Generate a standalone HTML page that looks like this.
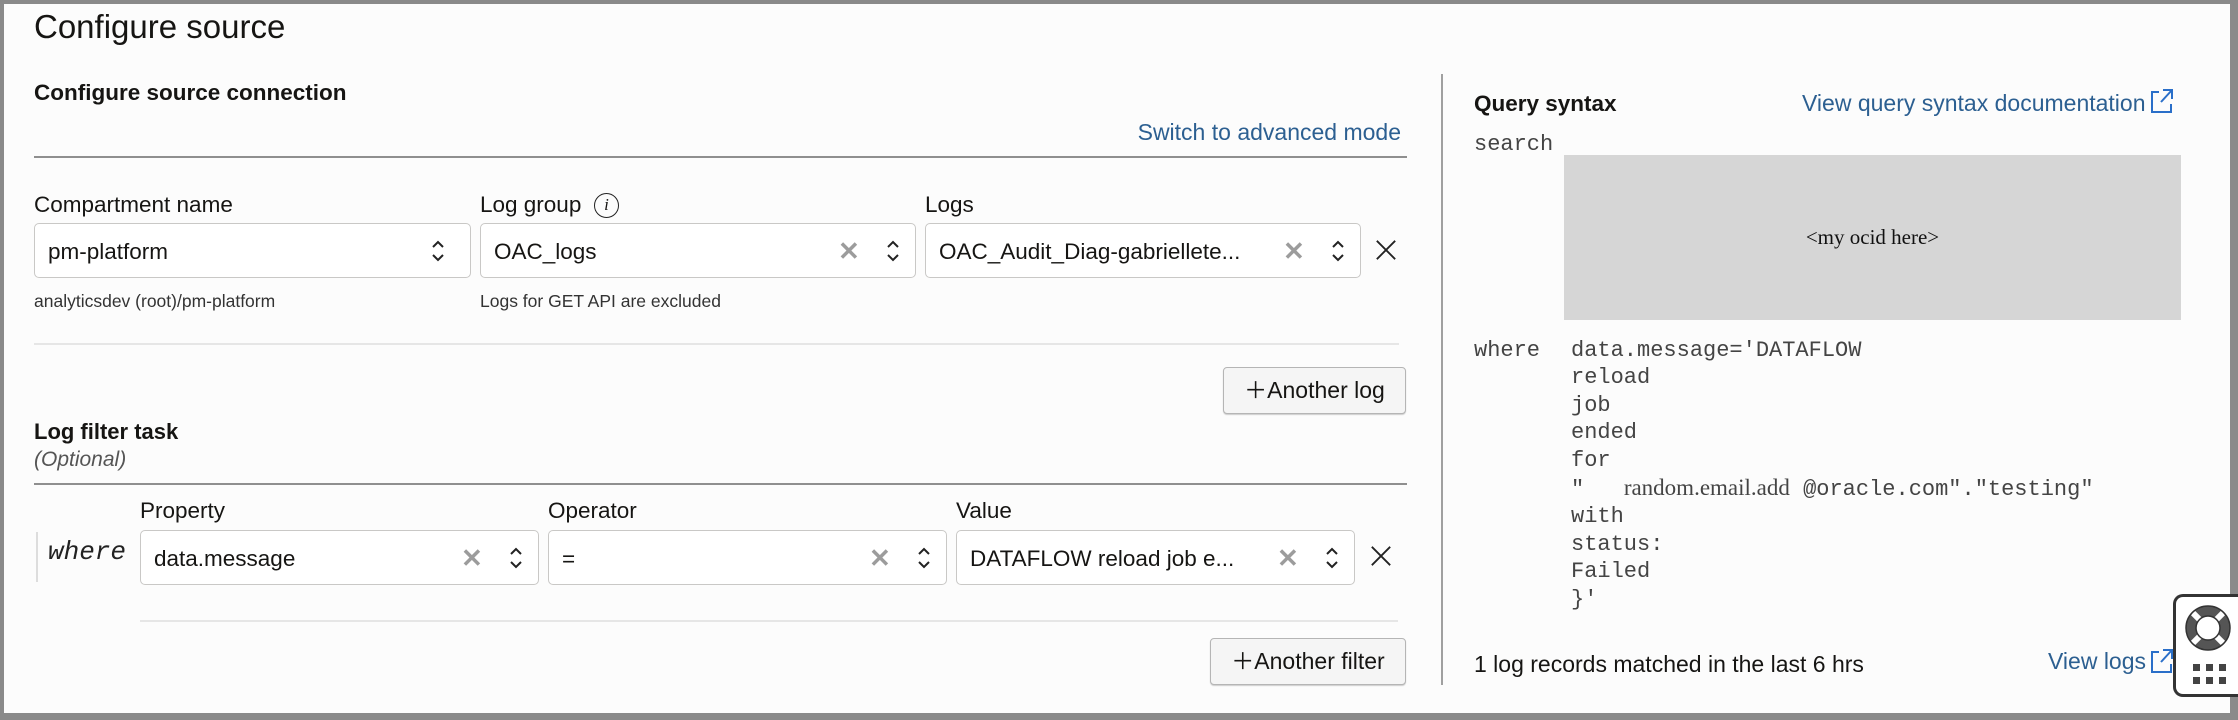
<!DOCTYPE html>
<html><head><meta charset="utf-8"><style>
*{box-sizing:border-box;margin:0;padding:0}
html,body{width:2238px;height:720px;overflow:hidden;background:#fcfcfc;font-family:"Liberation Sans",Arial,sans-serif;color:#161513}
.frame{position:absolute;left:0;top:0;width:2238px;height:720px;border:4px solid #8a8a8a;border-bottom-width:7px;border-right-width:8px}
.a{position:absolute;white-space:nowrap}
.lbl{font-size:22.5px;color:#161513}
.inp{position:absolute;height:55px;border:1.5px solid #c9c8c6;border-radius:5px;background:#fff;font-size:22.5px;padding-left:13px;line-height:55px;white-space:nowrap;overflow:hidden}
.clr{position:absolute;top:0;font-size:26px;color:#9c9c9c;line-height:55px;font-weight:bold}
.sp{position:absolute;top:14px;width:16px;height:26px}
.x{position:absolute}
.hr{position:absolute;height:2px;background:#8f8f8f}
.thin{position:absolute;height:2px;background:#e6e6e6}
.btn{position:absolute;border:1.5px solid #b5b5b5;border-radius:4px;background:#f5f5f5;font-size:23px;text-align:center;line-height:45px;box-shadow:0 1px 1px #ccc}
.link{color:#2c5f91}
.code{font-family:"Liberation Mono",monospace;font-size:22px;color:#444;position:absolute;left:1571px;line-height:27.4px}
</style></head><body>
<div class="frame"></div>
<div class="a" style="left:34px;top:8px;font-size:33px">Configure source</div>
<div class="a" style="left:34px;top:80px;font-size:22.5px;font-weight:bold">Configure source connection</div>
<div class="a link" style="right:837px;top:119px;font-size:23px">Switch to advanced mode</div>
<div class="hr" style="left:34px;top:156px;width:1373px"></div>

<div class="a lbl" style="left:34px;top:192px">Compartment name</div>
<div class="a lbl" style="left:480px;top:192px">Log group</div>
<div class="a" style="left:594px;top:193px;width:25px;height:25px;border:1.5px solid #222;border-radius:50%;font-family:'Liberation Serif',serif;font-style:italic;font-size:17px;text-align:center;line-height:22px">i</div>
<div class="a lbl" style="left:925px;top:192px">Logs</div>

<svg width="0" height="0" style="position:absolute"><defs><symbol id="ud" viewBox="0 0 16 26"><path d="M3 9 L8 4 L13 9 M3 17 L8 22 L13 17" fill="none" stroke="#222" stroke-width="2"/></symbol>
<symbol id="cx" viewBox="0 0 24 24"><path d="M2 2L22 22M22 2L2 22" stroke="#222" stroke-width="2"/></symbol></defs></svg>

<div class="inp" style="left:34px;top:223px;width:437px">pm-platform<svg class="sp" style="left:395px"><use href="#ud"/></svg></div>
<div class="inp" style="left:480px;top:223px;width:436px">OAC_logs<span class="clr" style="left:357px">✕</span><svg class="sp" style="left:404px"><use href="#ud"/></svg></div>
<div class="inp" style="left:925px;top:223px;width:436px">OAC_Audit_Diag-gabriellete...<span class="clr" style="left:357px">✕</span><svg class="sp" style="left:404px"><use href="#ud"/></svg></div>
<svg class="x" style="left:1375px;top:239px" width="22" height="22"><use href="#cx"/></svg>
<div class="a" style="left:34px;top:291px;font-size:17.5px;color:#333">analyticsdev (root)/pm-platform</div>
<div class="a" style="left:480px;top:291px;font-size:17.5px;color:#333">Logs for GET API are excluded</div>
<div class="thin" style="left:34px;top:343px;width:1365px"></div>
<div class="btn" style="left:1223px;top:367px;width:183px;height:47px">＋Another log</div>

<div class="a" style="left:34px;top:419px;font-size:22px;font-weight:bold">Log filter task</div>
<div class="a" style="left:34px;top:448px;font-size:21px;font-style:italic;color:#555">(Optional)</div>
<div class="hr" style="left:34px;top:483px;width:1373px"></div>

<div class="a lbl" style="left:140px;top:498px">Property</div>
<div class="a lbl" style="left:548px;top:498px">Operator</div>
<div class="a lbl" style="left:956px;top:498px">Value</div>
<div class="a" style="left:36px;top:532px;width:2px;height:50px;background:#ddd"></div>
<div class="a" style="left:48px;top:537px;font-family:'Liberation Mono',monospace;font-style:italic;font-size:26px;color:#222">where</div>
<div class="inp" style="left:140px;top:530px;width:399px">data.message<span class="clr" style="left:320px">✕</span><svg class="sp" style="left:367px"><use href="#ud"/></svg></div>
<div class="inp" style="left:548px;top:530px;width:399px">=<span class="clr" style="left:320px">✕</span><svg class="sp" style="left:367px"><use href="#ud"/></svg></div>
<div class="inp" style="left:956px;top:530px;width:399px">DATAFLOW reload job e...<span class="clr" style="left:320px">✕</span><svg class="sp" style="left:367px"><use href="#ud"/></svg></div>
<svg class="x" style="left:1370px;top:545px" width="22" height="22"><use href="#cx"/></svg>
<div class="thin" style="left:140px;top:620px;width:1258px"></div>
<div class="btn" style="left:1210px;top:638px;width:196px;height:47px">＋Another filter</div>

<div class="a" style="left:1441px;top:74px;width:2px;height:611px;background:#a0a0a0"></div>
<div class="a" style="left:1474px;top:91px;font-size:22.5px;font-weight:bold">Query syntax</div>
<div class="a link" style="left:1802px;top:90px;font-size:23px">View query syntax documentation</div>
<svg class="a" style="left:2150px;top:88px" width="24" height="26" viewBox="0 0 24 26"><path d="M9 4H2V24H21V16M13 2H22V11M22 2L11 14" fill="none" stroke="#2a6fc9" stroke-width="2"/></svg>
<div class="code" style="left:1474px;top:131px">search</div>
<div class="a" style="left:1564px;top:155px;width:617px;height:165px;background:#d6d6d6;font-family:'Liberation Serif',serif;font-size:21px;text-align:center;line-height:165px;color:#111">&lt;my ocid here&gt;</div>
<div class="code" style="left:1474px;top:337px">where</div>
<div class="code" style="top:337px">data.message='DATAFLOW<br>reload<br>job<br>ended<br>for<br>"&nbsp;&nbsp; <span style="font-family:'Liberation Serif',serif;font-size:23px">random.email.add</span> @oracle.com"."testing"<br>with<br>status:<br>Failed<br>}'</div>
<div class="a" style="left:1474px;top:651px;font-size:23px">1 log records matched in the last 6 hrs</div>
<div class="a link" style="left:2048px;top:648px;font-size:23px">View logs</div>
<svg class="a" style="left:2150px;top:648px" width="24" height="26" viewBox="0 0 24 26"><path d="M9 4H2V24H21V16M13 2H22V11M22 2L11 14" fill="none" stroke="#2a6fc9" stroke-width="2"/></svg>

<div class="a" style="left:2173px;top:594px;width:70px;height:103px;border:3px solid #333;border-right:none;border-radius:10px 0 0 10px;background:#fff"></div>
<svg class="a" style="left:2178px;top:598px" width="60" height="95" viewBox="0 0 60 95">
<circle cx="30" cy="30" r="22" fill="#555"/><circle cx="30" cy="30" r="12" fill="#fff"/>
<path d="M14 14L22 22M46 14L38 22M14 46L22 38M46 46L38 38" stroke="#fff" stroke-width="6"/>
<circle cx="30" cy="30" r="22" fill="none" stroke="#333" stroke-width="1.5"/>
<circle cx="30" cy="30" r="12" fill="none" stroke="#333" stroke-width="1.5"/>
<g fill="#444"><rect x="15" y="66" width="7" height="7"/><rect x="28" y="66" width="7" height="7"/><rect x="41" y="66" width="7" height="7"/><rect x="15" y="79" width="7" height="7"/><rect x="28" y="79" width="7" height="7"/><rect x="41" y="79" width="7" height="7"/></g></svg>
</body></html>
